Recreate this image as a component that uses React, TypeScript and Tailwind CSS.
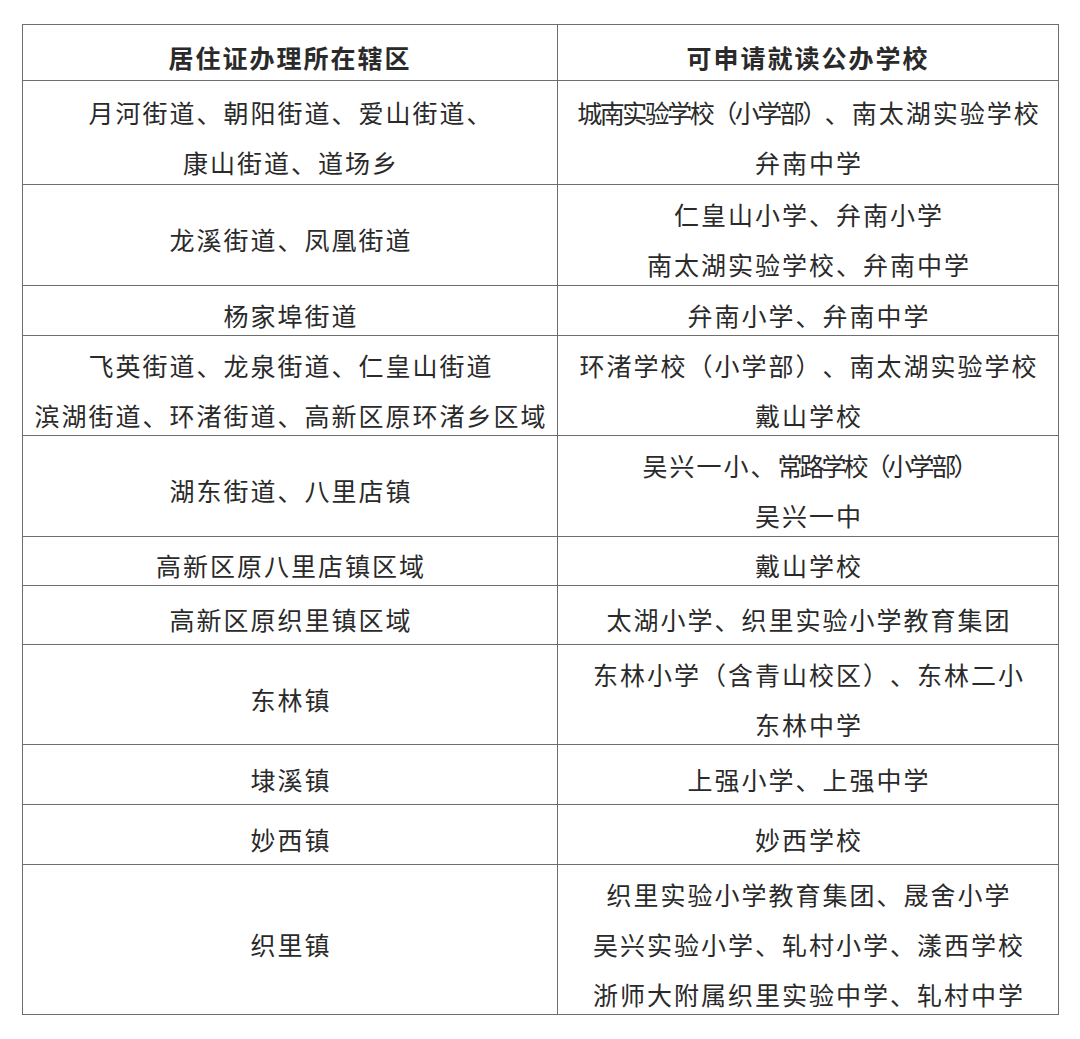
import type { ReactElement, ReactNode } from 'react'

type Row = {
  h: string
  left: ReactNode[]
  right: ReactNode[]
}

function Tight({ children }: { children: ReactNode }): ReactElement {
  return <span className="tracking-[-2.5px]">{children}</span>
}

const rows: Row[] = [
  {
    h: 'h-[104px]',
    left: ['月河街道、朝阳街道、爱山街道、', '康山街道、道场乡'],
    right: [
      <>
        <Tight>城南实验学校（小学部）</Tight>、南太湖实验学校
      </>,
      '弁南中学',
    ],
  },
  {
    h: 'h-[101px]',
    left: ['龙溪街道、凤凰街道'],
    right: ['仁皇山小学、弁南小学', '南太湖实验学校、弁南中学'],
  },
  {
    h: 'h-[50px]',
    left: ['杨家埠街道'],
    right: ['弁南小学、弁南中学'],
  },
  {
    h: 'h-[100px]',
    left: ['飞英街道、龙泉街道、仁皇山街道', '滨湖街道、环渚街道、高新区原环渚乡区域'],
    right: ['环渚学校（小学部）、南太湖实验学校', '戴山学校'],
  },
  {
    h: 'h-[101px]',
    left: ['湖东街道、八里店镇'],
    right: [
      <>
        吴兴一小、<span className="tracking-[-3px]">常路学校（小学部）</span>
      </>,
      '吴兴一中',
    ],
  },
  {
    h: 'h-[49px]',
    left: ['高新区原八里店镇区域'],
    right: ['戴山学校'],
  },
  {
    h: 'h-[59px]',
    left: ['高新区原织里镇区域'],
    right: ['太湖小学、织里实验小学教育集团'],
  },
  {
    h: 'h-[100px]',
    left: ['东林镇'],
    right: ['东林小学（含青山校区）、东林二小', '东林中学'],
  },
  {
    h: 'h-[60px]',
    left: ['埭溪镇'],
    right: ['上强小学、上强中学'],
  },
  {
    h: 'h-[60px]',
    left: ['妙西镇'],
    right: ['妙西学校'],
  },
  {
    h: 'h-[150px]',
    left: ['织里镇'],
    right: [
      '织里实验小学教育集团、晟舍小学',
      '吴兴实验小学、轧村小学、漾西学校',
      '浙师大附属织里实验中学、轧村中学',
    ],
  },
]

function Cell({
  lines,
  className,
}: {
  lines: ReactNode[]
  className: string
}): ReactElement {
  return (
    <div
      className={`flex flex-col items-center justify-center border-b border-r border-[#6e6e6e] pt-[8px] ${className}`}
    >
      {lines.map((line, i) => (
        <div
          key={i}
          className="whitespace-nowrap pl-[2px] leading-[50px]"
        >
          {line}
        </div>
      ))}
    </div>
  )
}

export default function App(): ReactElement {
  return (
    <div className="min-h-[1039px] w-[1080px] bg-white pl-[22px] pt-[24px] font-['Noto_Sans_CJK_SC',sans-serif] text-[25px] tracking-[2px] text-[#2a2a2a] [text-spacing-trim:space-all]">
      <div className="grid w-[1037px] grid-cols-[535px_501px] border-l border-t border-[#6e6e6e]">
        <div className="flex h-[56px] items-center justify-center border-b border-r border-[#6e6e6e] pt-[8px] font-bold leading-[50px]">
          居住证办理所在辖区
        </div>
        <div className="flex h-[56px] items-center justify-center border-b border-r border-[#6e6e6e] pt-[8px] font-bold leading-[50px]">
          可申请就读公办学校
        </div>
        {rows.map((row, i) => (
          <div
            key={i}
            className="contents"
          >
            <Cell
              className={row.h}
              lines={row.left}
            />
            <Cell
              className={row.h}
              lines={row.right}
            />
          </div>
        ))}
      </div>
    </div>
  )
}
